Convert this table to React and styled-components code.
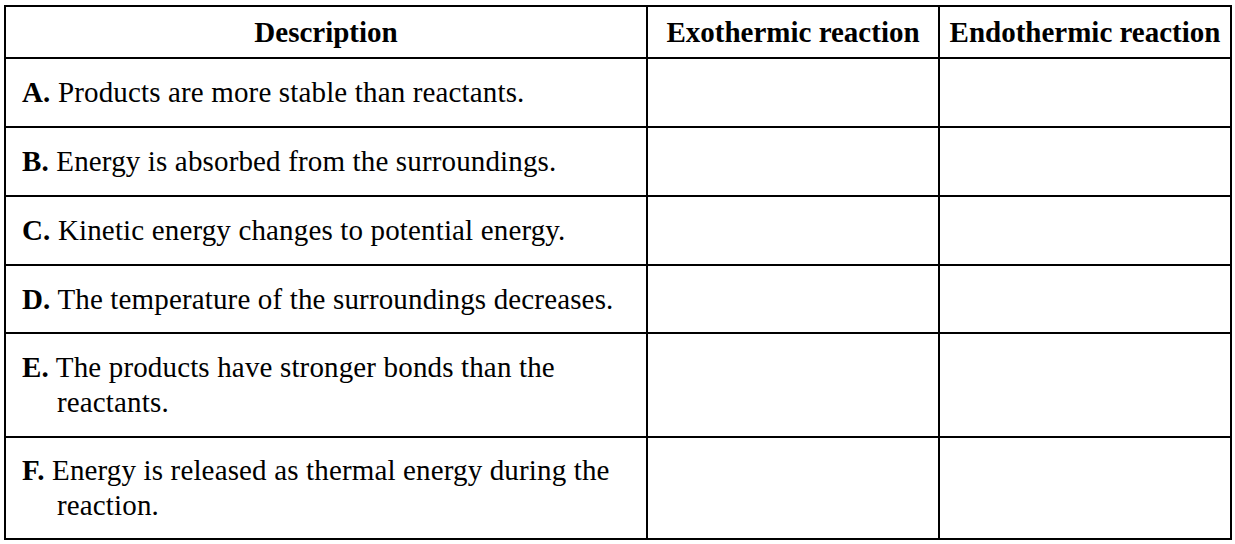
import React from "react";
import styled, { createGlobalStyle } from "styled-components";

const GlobalStyle = createGlobalStyle`
  body {
    margin: 0;
    background: #ffffff;
    font-family: "Liberation Serif", "Times New Roman", serif;
    color: #000000;
  }
`;

const Page = styled.div`
  padding: 5px 0 0 4px;
`;

const Grid = styled.div`
  display: grid;
  grid-template-columns: 640px 290px 290px;
  grid-template-rows: 50px 67px 67px 67px 66px 102px 100px;
  gap: 2px;
  padding: 2px;
  width: 1224px;
  background: #000000;
`;

const HeadCell = styled.div`
  background: #ffffff;
  display: flex;
  align-items: center;
  justify-content: center;
  font-size: 29px;
  font-weight: bold;
  line-height: 35px;
  white-space: nowrap;
`;

const Cell = styled.div`
  background: #ffffff;
  display: flex;
  align-items: center;
`;

const DescText = styled.p`
  margin: 0;
  padding: 0 20px 0 51px;
  text-indent: -35px;
  font-size: 29px;
  line-height: 35px;
  letter-spacing: 0.15px;
`;

const Label = styled.b`
  font-weight: bold;
`;

const rows = [
  { label: "A.", text: "Products are more stable than reactants." },
  { label: "B.", text: "Energy is absorbed from the surroundings." },
  { label: "C.", text: "Kinetic energy changes to potential energy." },
  { label: "D.", text: "The temperature of the surroundings decreases." },
  { label: "E.", text: "The products have stronger bonds than the reactants." },
  { label: "F.", text: "Energy is released as thermal energy during the reaction." },
];

export default function App() {
  return (
    <Page>
      <GlobalStyle />
      <Grid>
        <HeadCell>Description</HeadCell>
        <HeadCell>Exothermic reaction</HeadCell>
        <HeadCell>Endothermic reaction</HeadCell>
        {rows.map((r) => (
          <React.Fragment key={r.label}>
            <Cell>
              <DescText>
                <Label>{r.label}</Label> {r.text}
              </DescText>
            </Cell>
            <Cell />
            <Cell />
          </React.Fragment>
        ))}
      </Grid>
    </Page>
  );
}
